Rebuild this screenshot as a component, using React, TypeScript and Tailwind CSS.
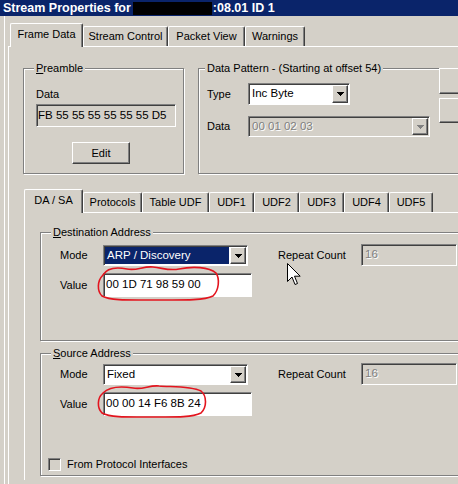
import React from 'react';

const raised =
  'border border-t-white border-l-white border-r-[#404040] border-b-[#404040] shadow-[inset_-1px_-1px_0_#808080]';
const sunken =
  'border border-t-[#808080] border-l-[#808080] border-r-white border-b-white shadow-[inset_1px_1px_0_#404040]';
const etched =
  'relative border border-[#808080] shadow-[inset_1px_1px_0_#fff,1px_1px_0_#fff]';

function Arrow({ disabled }: { disabled?: boolean }) {
  return (
    <svg width="7" height="4" viewBox="0 0 7 4" className="block">
      <path
        d="M0 0h7v1h-1v1h-1v1h-1v1h-1v-1h-1v-1h-1v-1h-1z"
        fill={disabled ? '#808080' : '#000'}
      />
    </svg>
  );
}

function Combo({
  value,
  className,
  disabled,
  selected,
}: {
  value: string;
  className: string;
  disabled?: boolean;
  selected?: boolean;
}) {
  return (
    <div className={`${sunken} ${disabled ? 'bg-[#d4d0c8]' : 'bg-white'} flex p-[1px] ${className}`}>
      <div className="flex-1 flex min-w-0 pr-[1px]">
        {selected ? (
          <span className="flex-1 flex items-center px-[2px] bg-[#0a246a] text-white">{value}</span>
        ) : (
          <span
            className={`flex items-center px-[2px] ${
              disabled ? 'text-[#808080] [text-shadow:1px_1px_0_#fff]' : ''
            }`}
          >
            {value}
          </span>
        )}
      </div>
      <div className={`${raised} w-[16px] bg-[#d4d0c8] flex items-center justify-center`}>
        <Arrow disabled={disabled} />
      </div>
    </div>
  );
}

function TextBox({ value, className }: { value: string; className: string }) {
  return (
    <div className={`${sunken} bg-white flex items-center px-[2px] ${className}`}>{value}</div>
  );
}

function Tab({ label, className, active }: { label: string; className: string; active?: boolean }) {
  return (
    <div
      className={`border-t border-l border-r border-t-white border-l-white border-r-[#404040] shadow-[inset_-1px_0_0_#808080] rounded-t-[2px] bg-[#d4d0c8] flex items-center justify-center ${
        active ? 'h-[24px] pb-[3px]' : 'h-[20px] mb-[1px]'
      } ${className}`}
    >
      {label}
    </div>
  );
}

function Legend({ children, className }: { children: React.ReactNode; className: string }) {
  return (
    <span className={`absolute top-[-8px] px-[2px] bg-[#d4d0c8] leading-[14px] ${className}`}>
      {children}
    </span>
  );
}

function AddressGroup({
  title,
  mnemonic,
  mode,
  value,
  selected,
  className,
  children,
}: {
  title: string;
  mnemonic: string;
  mode: string;
  value: string;
  selected?: boolean;
  className: string;
  children?: React.ReactNode;
}) {
  return (
    <div className={`${etched} w-[460px] ${className}`}>
      <Legend className="left-[10px]">
        <u className="underline-offset-[1px]">{mnemonic}</u>
        {title}
      </Legend>
      <div className="pl-[19px]">
        <div className="flex items-start">
          <span className="w-[43px] leading-[22px]">Mode</span>
          <Combo
            value={mode}
            selected={selected}
            className="w-[145px] h-[21px] mt-[1px] text-[11.5px]"
          />
          <span className="ml-[30px] w-[83px] leading-[22px]">Repeat Count</span>
          <div
            className={`${sunken} w-[96px] h-[22px] flex items-center px-[3px] text-[11.5px] text-[#808080] [text-shadow:1px_1px_0_#fff]`}
          >
            16
          </div>
        </div>
        <div className="flex items-start mt-[7px]">
          <span className="w-[43px] leading-[24px]">Value</span>
          <TextBox value={value} className="w-[149px] h-[24px] text-[11.5px]" />
        </div>
      </div>
      {children}
    </div>
  );
}

export default function App() {
  return (
    <div className="relative w-[458px] h-[484px] overflow-hidden bg-[#d4d0c8] text-black text-[11px] font-['Liberation_Sans',Arial,sans-serif]">
      {/* Title bar */}
      <div className="h-[16px] bg-[#0a246a] flex items-center pl-[3px] text-white font-bold text-[12.5px] leading-[14px] whitespace-nowrap">
        <span>Stream Properties for</span>
        <span className="ml-[2px] w-[79px] h-[13px] bg-black" />
        <span className="ml-[1px]">:08.01 ID 1</span>
      </div>

      <div className="shadow-[inset_4px_0_0_#d4d0c8,inset_5px_0_0_#fff] h-[468px] pt-[7px]">
        {/* Outer tabs */}
        <div className="relative z-10 flex items-end h-[24px] ml-[10px] -mb-[1px]">
          <Tab label="Frame Data" active className="w-[73px]" />
          <Tab label="Stream Control" className="w-[85px]" />
          <Tab label="Packet View" className="w-[77px]" />
          <Tab label="Warnings" className="w-[60px]" />
        </div>

        <div className="ml-[8px] border-t border-l border-white w-[600px] h-[440px]">
          {/* Preamble / Data Pattern */}
          <div className="flex mt-[21px] ml-[14px]">
            <div className={`${etched} w-[161px] h-[106px] pl-[12px] pt-[18px]`}>
              <Legend className="left-[10px]">
                <u className="underline-offset-[1px]">P</u>reamble
              </Legend>
              <div className="leading-[14px]">Data</div>
              <div
                className={`${sunken} mt-[3px] w-[140px] h-[23px] flex items-center pl-[1px] text-[11.5px]`}
              >
                FB 55 55 55 55 55 55 D5
              </div>
              <div
                className={`${raised} mt-[15px] ml-[36px] w-[58px] h-[22px] flex items-center justify-center`}
              >
                Edit
              </div>
            </div>

            <div className={`${etched} ml-[14px] w-[300px] h-[106px] pl-[8px] pt-[14px]`}>
              <Legend className="left-[6px]">Data Pattern - (Starting at offset 54)</Legend>
              <div className="flex items-center">
                <span className="w-[41px]">Type</span>
                <Combo value="Inc Byte" className="w-[102px] h-[22px] text-[11.5px]" />
              </div>
              <div className="flex items-center mt-[11px]">
                <span className="w-[41px]">Data</span>
                <Combo value="00 01 02 03" disabled className="w-[182px] h-[21px] text-[11.5px]" />
              </div>
              <div className={`${raised} absolute left-[240px] top-[-1px] w-[80px] h-[26px] bg-[#d4d0c8]`} />
              <div className={`${raised} absolute left-[240px] top-[29px] w-[80px] h-[25px] bg-[#d4d0c8]`} />
            </div>
          </div>

          {/* Inner tabs */}
          <div className="relative z-10 flex items-end h-[24px] mt-[15px] ml-[15px] -mb-[1px]">
            <Tab label="DA / SA" active className="w-[59px]" />
            <Tab label="Protocols" className="w-[59px]" />
            <Tab label="Table UDF" className="w-[67px]" />
            <Tab label="UDF1" className="w-[45px]" />
            <Tab label="UDF2" className="w-[45px]" />
            <Tab label="UDF3" className="w-[45px]" />
            <Tab label="UDF4" className="w-[45px]" />
            <Tab label="UDF5" className="w-[44px]" />
          </div>

          <div className="ml-[15px] border-t border-l border-white w-[500px] h-[268px]">
            <AddressGroup
              title="estination Address"
              mnemonic="D"
              mode="ARP / Discovery"
              value="00 1D 71 98 59 00"
              selected
              className="ml-[15px] mt-[19px] h-[109px] pt-[11px]"
            />
            <AddressGroup
              title="ource Address"
              mnemonic="S"
              mode="Fixed"
              value="00 00 14 F6 8B 24"
              className="ml-[15px] mt-[12px] h-[123px] pt-[9px]"
            >
              <div className="flex items-center gap-[6px] pl-[7px] mt-[41px]">
                <span
                  className={`${sunken} w-[13px] h-[13px] bg-[#d4d0c8] shadow-[inset_1px_1px_0_#404040,inset_-1px_-1px_0_#d4d0c8]`}
                />
                <span className="leading-[14px]">From Protocol Interfaces</span>
              </div>
            </AddressGroup>
          </div>
        </div>
      </div>

      {/* Red hand-drawn marks */}
      <svg
        className="absolute left-[95px] top-[263px]"
        width="126"
        height="40"
        viewBox="0 0 126 40"
        fill="none"
      >
        <path
          d="M8 12 C12 5 22 4 32 6 C42 8 48 3 58 4 C68 5 74 8 84 6 C98 3 114 4 121 10 C125 16 124 27 118 33 C108 38 84 37 60 37 C36 37 16 38 7 33 C2 28 2 18 8 12"
          stroke="#e3141e"
          strokeWidth="1.6"
          strokeLinecap="round"
        />
      </svg>
      <svg
        className="absolute left-[95px] top-[383px]"
        width="116"
        height="38"
        viewBox="0 0 116 38"
        fill="none"
      >
        <path
          d="M8 10 C14 4 26 3 38 5 C48 7 54 2 64 3 C78 4 96 3 106 8 C112 13 112 24 106 30 C96 35 76 34 56 34 C36 34 16 35 7 30 C2 25 2 15 8 10"
          stroke="#e3141e"
          strokeWidth="1.6"
          strokeLinecap="round"
        />
      </svg>

      {/* Mouse pointer */}
      <svg className="absolute left-[287px] top-[263px]" width="14" height="23" viewBox="0 0 14 23">
        <path
          d="M0.5 0.5 V18.5 L5 14 L8 21.5 L10.5 20.5 L7.5 13.2 H13.2 Z"
          fill="#fff"
          stroke="#000"
          strokeWidth="1"
          strokeLinejoin="miter"
        />
      </svg>
    </div>
  );
}
